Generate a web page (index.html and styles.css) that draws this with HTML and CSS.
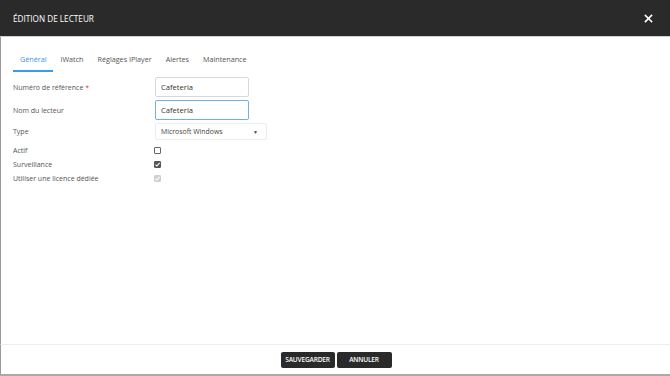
FILE: index.html
```html
<!DOCTYPE html>
<html>
<head>
  <title>Édition de lecteur</title>
  <link rel="stylesheet" href="styles.css">
</head>
<body>
  <div class="modal">
    <div class="modal-header">
      <h1>ÉDITION DE LECTEUR</h1>
      <span class="close">
        <svg width="9" height="9" viewBox="0 0 9 9"><path d="M1.5 1.5L7.5 7.5M7.5 1.5L1.5 7.5" stroke="#fff" stroke-width="1.7" stroke-linecap="square"/></svg>
      </span>
    </div>
    <div class="modal-body">
      <div class="tabs">
        <span class="tab active">Général</span>
        <span class="tab">IWatch</span>
        <span class="tab">Réglages IPlayer</span>
        <span class="tab">Alertes</span>
        <span class="tab">Maintenance</span>
      </div>
      <form class="form">
        <div class="row row-input">
          <label>Numéro de référence <span class="required">*</span></label>
          <input class="text-input" type="text" value="Cafeteria">
        </div>
        <div class="row row-input">
          <label>Nom du lecteur</label>
          <input class="text-input focused" type="text" value="Cafeteria">
        </div>
        <div class="row row-select">
          <label>Type</label>
          <div class="select">
            <span>Microsoft Windows</span>
            <span class="arrow">&#9660;</span>
          </div>
        </div>
        <div class="row row-check">
          <label>Actif</label>
          <span class="check"></span>
        </div>
        <div class="row row-check">
          <label>Surveillance</label>
          <span class="check checked">
            <svg width="7" height="7" viewBox="0 0 7 7"><path d="M1.5 3.6L2.9 5L5.6 1.8" stroke="#fff" stroke-width="1.1" fill="none"/></svg>
          </span>
        </div>
        <div class="row row-check">
          <label>Utiliser une licence dédiée</label>
          <span class="check disabled">
            <svg width="7" height="7" viewBox="0 0 7 7"><path d="M1.5 3.6L2.9 5L5.6 1.8" stroke="#fff" stroke-width="1.1" fill="none"/></svg>
          </span>
        </div>
      </form>
    </div>
    <div class="modal-footer">
      <button type="button" class="btn">SAUVEGARDER</button>
      <button type="button" class="btn">ANNULER</button>
    </div>
  </div>
</body>
</html>
```

FILE: styles.css
```css
/* Modal for editing a player */
body {
  margin: 0;
  padding: 0;
  background-color: #fff;
  font-family: "Open Sans", Arial, sans-serif;
}

.modal {
  display: flex;
  flex-direction: column;
  width: 670px;
  height: 376px;
  box-sizing: border-box;
  border-bottom: 2px solid #a9a9a9;
}

.modal-header {
  display: flex;
  align-items: center;
  justify-content: space-between;
  height: 36px;
  padding: 0 17px 0 13px;
  background-color: #2a2a2a;
  border-bottom: 1px solid #cfcfcf;
}

.modal-header h1 {
  margin: 0;
  color: #fff;
  font-size: 8.2px;
  font-weight: 400;
}

.close {
  display: flex;
  margin-top: 1px;
}

.modal-body {
  flex-grow: 1;
  padding: 11px 13px 0 13px;
  border-left: 1px solid #9a9a9a;
}

.tabs {
  display: flex;
  margin-left: -1px;
}

.tab {
  padding: 6px 7px 6px 7px;
  font-size: 7.2px;
  color: #555;
  border-bottom: 2px solid transparent;
}

.tab.active {
  color: #3a95dc;
  border-bottom-color: #3a9be6;
}

.form {
  margin-top: 5px;
  margin-left: -1px;
}

.row {
  display: flex;
  align-items: center;
}

.row label {
  width: 142px;
  font-size: 7px;
  color: #555;
}

.row-input {
  margin-bottom: 3px;
}

.row-select {
  margin-bottom: 3px;
}

.row-check {
  height: 14px;
}

.required {
  color: #e03a3a;
}

.text-input {
  box-sizing: border-box;
  width: 94px;
  height: 20px;
  margin: 0;
  padding: 0 5px;
  border: 1px solid #d8d8d8;
  border-radius: 2px;
  font-family: "Open Sans", Arial, sans-serif;
  font-size: 7.6px;
  color: #333;
  outline: none;
}

.text-input.focused {
  border-color: #6fb0e6;
}

.select {
  box-sizing: border-box;
  display: flex;
  align-items: center;
  justify-content: space-between;
  width: 112px;
  height: 17px;
  padding: 0 8px 0 5px;
  border: 1px solid #ececec;
  border-radius: 2px;
  font-size: 6.9px;
  color: #444;
}

.arrow {
  font-size: 5px;
  color: #444;
}

.check {
  box-sizing: border-box;
  display: flex;
  align-items: center;
  justify-content: center;
  width: 7px;
  height: 7px;
  margin-left: -1px;
  border: 1px solid #666;
  border-radius: 1px;
}

.check.checked {
  border-color: #555;
  background-color: #555;
}

.check.disabled {
  border-color: #d0d0d0;
  background-color: #d0d0d0;
}

.check svg {
  flex-shrink: 0;
}

.modal-footer {
  display: flex;
  justify-content: center;
  align-items: center;
  gap: 2px;
  height: 29px;
  padding-left: 1px;
  border-top: 1px solid #ececec;
  border-left: 1px solid #9a9a9a;
}

.btn {
  height: 16px;
  padding: 0;
  border: none;
  border-radius: 2px;
  background-color: #2a2a2a;
  color: #fff;
  font-family: "Open Sans", Arial, sans-serif;
  font-size: 6.6px;
  font-weight: 600;
  letter-spacing: -0.2px;
  cursor: pointer;
}

.btn:first-child {
  width: 54px;
}

.btn:last-child {
  width: 55px;
}
```
